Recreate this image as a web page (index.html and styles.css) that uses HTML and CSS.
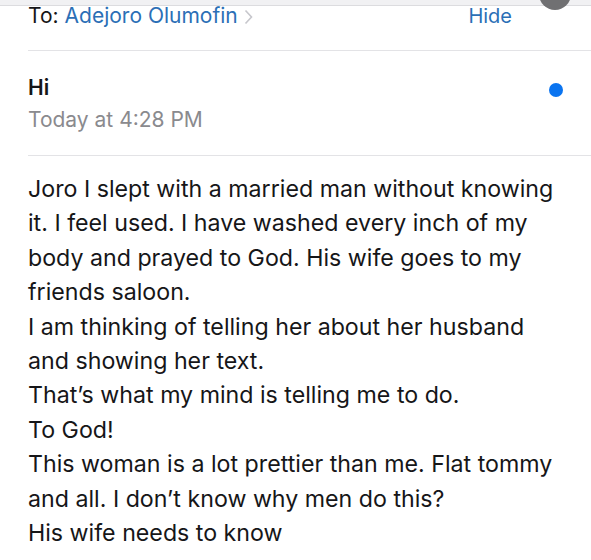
FILE: index.html
```html
<!DOCTYPE html>
<html lang="en">
<head>
  <meta charset="UTF-8" />
  <title>Mail - Hi</title>
  <link rel="stylesheet" href="styles.css">
</head>
<body>
  <div class="topbar"></div>
  <div class="avatar"></div>
  <div class="row to-row">
    <span class="label">To:</span>
    <span class="name">Adejoro Olumofin</span>
    <svg class="chev" width="9" height="16" viewBox="0 0 9 16"><path d="M1.5 1.5 L7.5 8 L1.5 14.5" fill="none" stroke="#c7c7cc" stroke-width="1.6"/></svg>
    <span class="hide">Hide</span>
  </div>
  <div class="row subject-row">
    <div class="subject-text">
      <div class="subject">Hi</div>
      <div class="date">Today at 4:28 PM</div>
    </div>
    <span class="unread"></span>
  </div>
  <div class="message">
    Joro I slept with a married man without knowing it. I feel used. I have washed every inch of my body and prayed to God. His wife goes to my friends saloon.<br>
    I am thinking of telling her about her husband and showing her text.<br>
    That’s what my mind is telling me to do.<br>
    To God!<br>
    This woman is a lot prettier than me. Flat tommy and all. I don’t know why men do this?<br>
    His wife needs to know
  </div>
</body>
</html>
```

FILE: styles.css
```css
body { margin: 0; background: #fff; font-family: Inter, "Liberation Sans", Arial, sans-serif; color: #161618; overflow: hidden; }
.topbar { height: 5px; background: #f1f1f3; border-bottom: 1px solid #dcdcdf; }
.avatar { position: absolute; top: -22px; left: 539px; width: 32px; height: 32px; border-radius: 50%; background: #707072; }
.row { margin-left: 28px; border-bottom: 1px solid #e3e3e6; display: flex; align-items: flex-start; }
.to-row { height: 44px; font-size: 21px; line-height: 20px; }
.label { margin-right: 6px; }
.name { color: #2b6fb6; }
.chev { margin-left: 6px; margin-top: 3px; }
.hide { color: #2b6fb6; font-size: 20px; margin-left: auto; margin-right: 79px; }
.subject-row { height: 104px; justify-content: space-between; }
.subject-text { padding-top: 26px; }
.subject { font-weight: 600; font-size: 21px; line-height: 22px; }
.date { color: #8a8a8e; font-size: 21px; line-height: 22px; margin-top: 10px; }
.unread { width: 14px; height: 14px; border-radius: 50%; background: #0a74f0; margin-top: 32px; margin-right: 28px; }
.message { margin: 16px 0 0 28px; font-size: 23.2px; line-height: 34.4px; padding-right: 20px; }
```
